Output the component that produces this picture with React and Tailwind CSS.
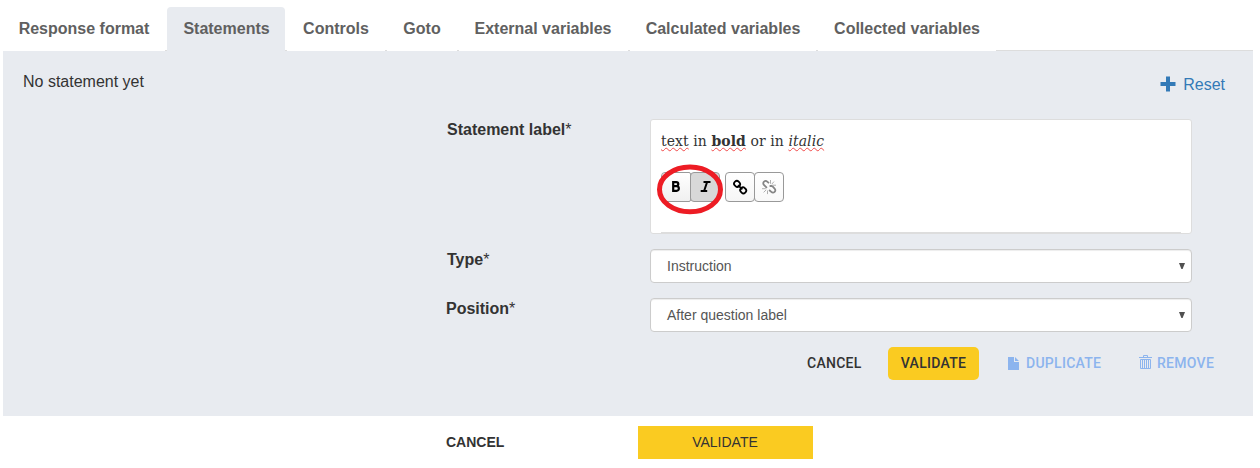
const tabs = [
  ['Response format', 'w-[162px]'],
  ['Statements', 'w-[118px] pl-px'],
  ['Controls', 'w-[98px]'],
  ['Goto', 'w-[70px]'],
  ['External variables', 'w-[169px] pr-px'],
  ['Calculated variables', 'w-[186px]'],
  ['Collected variables', 'w-[178px]'],
];

function Tabs() {
  return (
    <nav className="ml-[3px] flex h-[51px] w-[1250px] pt-[7px] text-[16px] font-bold text-[#606060]">
      {tabs.map(([name, width], i) => (
        <div key={name} className="flex">
          <div
            className={`${width} flex h-[44px] justify-center rounded-t pt-[10px] leading-[23px] whitespace-nowrap ${i === 1 ? 'bg-[#e8ebf0]' : ''}`}
          >
            {name}
          </div>
          {i < tabs.length - 1 && <div className="h-[44px] w-[2px] border-b border-[#dddddd]" />}
        </div>
      ))}
      <div className="h-[44px] flex-1 border-b border-[#dddddd]" />
    </nav>
  );
}

function Label({ children, shift = 'pt-px' }) {
  return (
    <label className={`${shift} w-[203px] text-[16px] leading-[20px] font-bold`}>
      {children}
      <span className="font-normal">*</span>
    </label>
  );
}

function Select({ value }) {
  return (
    <div className="flex h-[34px] w-[542px] items-center justify-between rounded border border-[#cccccc] bg-white pr-[6px] pl-[16px] text-[14px] text-[#555555] shadow-[inset_0_1px_1px_rgba(0,0,0,0.075)]">
      <span>{value}</span>
      <svg width="6" height="6" viewBox="0 0 6 6" fill="#505050">
        <path d="M0 0h6L3.6 6H2.4z" />
      </svg>
    </div>
  );
}

function LinkIcon() {
  return (
    <svg width="16" height="16" viewBox="0 0 16 16" fill="none" stroke="#000" strokeWidth="1.8">
      <rect x="2" y="2.2" width="6" height="5.4" rx="2.5" transform="rotate(45 5 5)" />
      <rect x="8.2" y="8.6" width="6" height="5.4" rx="2.5" transform="rotate(45 11.2 11.3)" />
      <path d="M6 6.2l4.4 4.2" />
    </svg>
  );
}

function UnlinkIcon() {
  return (
    <svg width="16" height="16" viewBox="0 0 16 16" fill="none" stroke="#858585">
      <path
        strokeWidth="1.8"
        d="M8 4.2L6.2 2.6C5.2 1.7 4 1.8 3 2.7S2 5 2.9 5.9l3 3M8.6 7l1.9 0c.6 0 .9.3 1.3.7l1.8 1.9c1 1 1 2.2 0 3.2s-2.3 1-3.3.1L8.1 11"
      />
      <path strokeWidth="1" stroke="#b0b0b0" d="M9.5 4.8V1M10.7 5.2L13 2.6M11.2 6.2H15M1 9.7h3.8M5.2 10.8l-2.6 2.6M6.5 11.5v3.6" />
    </svg>
  );
}

const button = 'flex h-[30px] items-center justify-center rounded-[4px] border border-[#999999]';
const misspelt = 'underline decoration-[#f04a4a] decoration-wavy decoration-[1px] underline-offset-[1px]';

function Editor() {
  return (
    <div className="relative h-[115px] w-[542px] rounded-[3px] border border-[#dddddd] bg-white px-[10px] pt-[10px]">
      <div className="h-[22px] font-['DejaVu_Serif_Condensed','DejaVu_Serif',serif] text-[15.5px] leading-[21px] tracking-[0.1px] whitespace-nowrap text-[#333333]">
        <span className={misspelt}>text</span> in <b className={misspelt}>bold</b> or in{' '}
        <i className={misspelt}>italic</i>
      </div>
      <div className="mt-[20px] flex">
        <div className={`${button} w-[30px] rounded-r-[2px] bg-gradient-to-b from-white to-[#f0f0f0]`}>
          <svg className="-mt-px" width="10" height="11" viewBox="0 0 10 11" fill="none" stroke="#000" strokeWidth="2.2">
            <path d="M2.2 1.1h3c2.8 0 2.8 4 0 4H2.4h3.2c3 0 3 4.8 0 4.8H2.2zV10" />
          </svg>
        </div>
        <div className={`${button} -ml-px w-[30px] bg-[#d8d8d8]`}>
          <svg className="-mt-px" width="11" height="11" viewBox="0 0 11 11" fill="none" stroke="#000" strokeWidth="2">
            <path d="M3.5 1h7M.7 10h6.5M7.1 1L4.1 10" />
          </svg>
        </div>
        <div className={`${button} ml-[5px] w-[30px] bg-gradient-to-b from-white to-[#f6f6f6]`}>
          <LinkIcon />
        </div>
        <div className={`${button} -ml-px w-[30px] bg-gradient-to-b from-white to-[#f9f9f9]`}>
          <UnlinkIcon />
        </div>
      </div>
      <div className="mt-[30px] h-px w-[520px] bg-[#dddddd]" />
      <svg className="absolute top-[44px] left-[5px]" width="68" height="51" viewBox="0 0 68 51" fill="none">
        <ellipse cx="34" cy="25.4" rx="30.5" ry="22.3" stroke="#ed1c24" strokeWidth="5" />
      </svg>
    </div>
  );
}

export default function App() {
  return (
    <div className="h-[468px] w-[1260px] overflow-hidden bg-white font-['Liberation_Sans',sans-serif] text-[#333333]">
      <Tabs />
      <main className="ml-[3px] h-[365px] w-[1250px] bg-[#e8ebf0]">
        <div className="flex h-[68px] justify-between pr-[28px] pl-[20px] text-[16px] leading-[20px]">
          <div className="pt-[21px]">No statement yet</div>
          <div className="flex h-[20px] gap-[7px] pt-[24px] text-[#337ab7]">
            <svg className="mt-px" width="16" height="16" viewBox="0 0 16 16" fill="currentColor">
              <path d="M6 .5h4V6h5.5v4H10v5.5H6V10H.5V6H6z" />
            </svg>
            <span>Reset</span>
          </div>
        </div>
        <div className="flex flex-col gap-[15px] pl-[444px]">
          <div className="flex">
            <Label>Statement label</Label>
            <Editor />
          </div>
          <div className="flex">
            <Label>Type</Label>
            <Select value="Instruction" />
          </div>
          <div className="-ml-px flex">
            <div className="-mt-px w-[204px]">
              <Label shift="pt-0">Position</Label>
            </div>
            <Select value="After question label" />
          </div>
        </div>
        <div className="mt-[15px] flex h-[33px] items-center pl-[804px] font-['Roboto',sans-serif] text-[14px] font-medium tracking-[0.28px]">
          <span className="w-[81px]">CANCEL</span>
          <button className="h-[33px] w-[91px] rounded-[5px] bg-[#facb21] tracking-[0.28px]">VALIDATE</button>
          <div className="ml-[29px] flex w-[131px] items-center text-[#8cb4ee]">
            <svg className="-mt-px" width="11" height="13" viewBox="0 0 11 13" fill="currentColor">
              <path d="M0 0h6v5h5v8H0zM7 0l4 4H7z" />
            </svg>
            <span className="ml-[7px]">DUPLICATE</span>
          </div>
          <div className="flex items-center text-[#8cb4ee]">
            <svg className="-mt-[3px]" width="13" height="14" viewBox="0 0 13 14" fill="none" stroke="currentColor">
              <path d="M0 2.5h13M4.5 2V.5h4V2M1.5 4.5h10v9h-10zM3.5 5v8M5.5 5v8M7.5 5v8M9.5 5v8" />
            </svg>
            <span className="ml-[5px]">REMOVE</span>
          </div>
        </div>
      </main>
      <footer className="flex pt-[10px] pl-[446px] text-[14px] leading-[33px]">
        <span className="w-[192px] font-bold">CANCEL</span>
        <button className="h-[33px] w-[175px] bg-[#facb21] pr-px">VALIDATE</button>
      </footer>
    </div>
  );
}
